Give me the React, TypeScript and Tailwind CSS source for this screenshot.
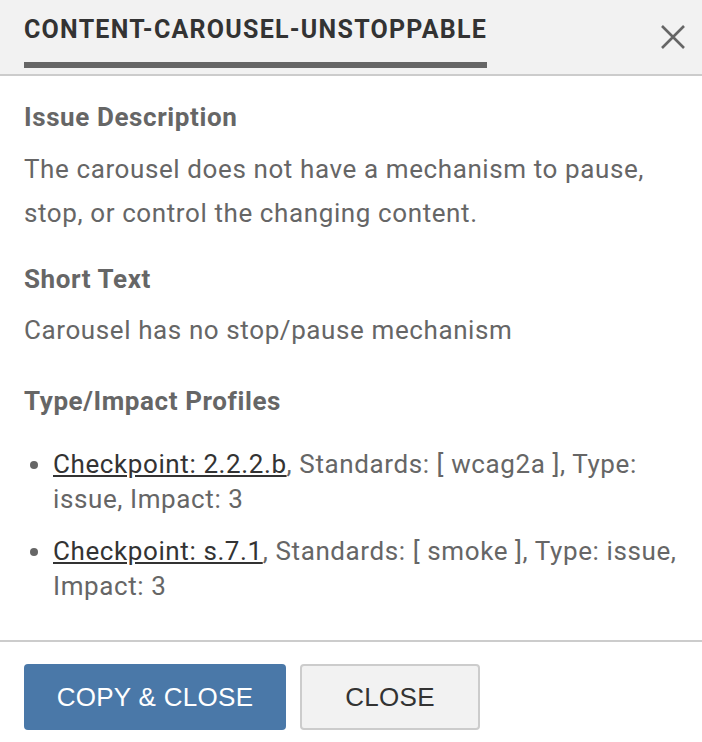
const profiles = [
  { link: "Checkpoint: 2.2.2.b", rest: ", Standards: [ wcag2a ], Type: issue, Impact: 3" },
  { link: "Checkpoint: s.7.1", rest: ", Standards: [ smoke ], Type: issue, Impact: 3" },
];

const App = () => {
  return (
    <div className="w-[702px] h-[742px] bg-white font-['Roboto',sans-serif] text-[#666] flex flex-col">
      <div className="h-[76px] bg-[#f2f2f2] border-b-2 border-[#ccc] flex items-start justify-between pl-6 pr-[17px]">
        <div className="flex flex-col pt-[14px]">
          <h1 className="text-[25px] leading-[32px] font-bold text-[#333] tracking-[1.25px]">
            CONTENT-CAROUSEL-UNSTOPPABLE
          </h1>
          <div className="h-[6px] bg-[#666] mt-[16px]" />
        </div>
        <button className="mt-[25px] text-[#666]" aria-label="Close">
          <svg width="24" height="24" viewBox="0 0 24 24" fill="none" stroke="currentColor" strokeWidth="2.6">
            <path d="M1 1L23 23M23 1L1 23" />
          </svg>
        </button>
      </div>

      <div className="flex-1 px-6 pt-[25px] text-[26px] tracking-[0.6px]">
        <h2 className="font-bold leading-[32px]">Issue Description</h2>
        <p className="mt-[14px] leading-[44px]">
          The carousel does not have a mechanism to pause, stop, or control the changing content.
        </p>
        <h2 className="font-bold leading-[32px] mt-[28px]">Short Text</h2>
        <p className="mt-[13px] leading-[44px]">Carousel has no stop/pause mechanism</p>
        <h2 className="font-bold leading-[32px] mt-[33px]">Type/Impact Profiles</h2>
        <ul className="mt-[30px] list-disc pl-[29px] space-y-[17px]">
          {profiles.map((p, i) => (
            <li key={i} className="leading-[35px]">
              <a href="#" className="underline text-[#333]">{p.link}</a>
              {p.rest}
            </li>
          ))}
        </ul>
      </div>

      <div className="border-t-2 border-[#ccc] h-[102px] px-6 pt-[22px] flex gap-[14px] items-start font-['Liberation_Sans',sans-serif] text-[26px] tracking-[0.3px]">
        <button className="w-[262px] h-[66px] rounded-[4px] bg-[#4a78a8] text-white">COPY &amp; CLOSE</button>
        <button className="w-[180px] h-[66px] rounded-[4px] bg-[#f2f2f2] border-2 border-[#ccc] text-[#333]">CLOSE</button>
      </div>
    </div>
  );
};

export default App;
